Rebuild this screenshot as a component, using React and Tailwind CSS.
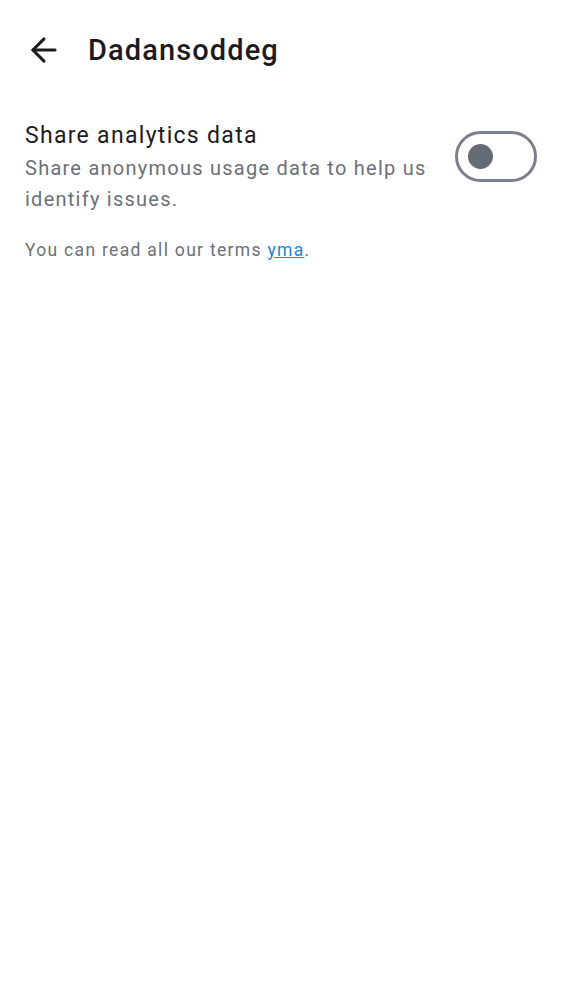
export default function App() {
  return (
    <div className="min-h-screen bg-white font-['Roboto',sans-serif]">
      <div className="flex items-center h-[100px] pl-[25px]">
        <svg width="38" height="38" viewBox="0 0 24 24" fill="none" stroke="#1d1b20" strokeWidth="1.9" strokeLinecap="round" strokeLinejoin="round">
          <path d="M19 12H5" />
          <path d="m12 19-7-7 7-7" />
        </svg>
        <h1 className="ml-[25px] text-[29px] leading-none font-medium text-[#1d1b20] tracking-[1.1px]">Dadansoddeg</h1>
      </div>
      <div className="flex items-start px-[25px] pt-[20px]">
        <div className="flex-1 pr-[16px]">
          <div className="text-[23px] leading-[31px] text-[#1d1b20] tracking-[1.3px]">Share analytics data</div>
          <div className="mt-[2px] text-[20px] leading-[31px] text-[#6b7079] tracking-[1.25px]">
            Share anonymous usage data to help us identify issues.
          </div>
        </div>
        <div className="mt-[11px] w-[82px] h-[51px] rounded-full border-[3px] border-[#7b808a] flex items-center pl-[10px] shrink-0">
          <div className="w-[25px] h-[25px] rounded-full bg-[#656b75]" />
        </div>
      </div>
      <p className="px-[25px] mt-[23px] text-[17.5px] leading-[24px] text-[#6b7079] tracking-[1.3px]">
        You can read all our terms <a href="#" className="text-[#1a86d6] underline">yma</a>.
      </p>
    </div>
  );
}
